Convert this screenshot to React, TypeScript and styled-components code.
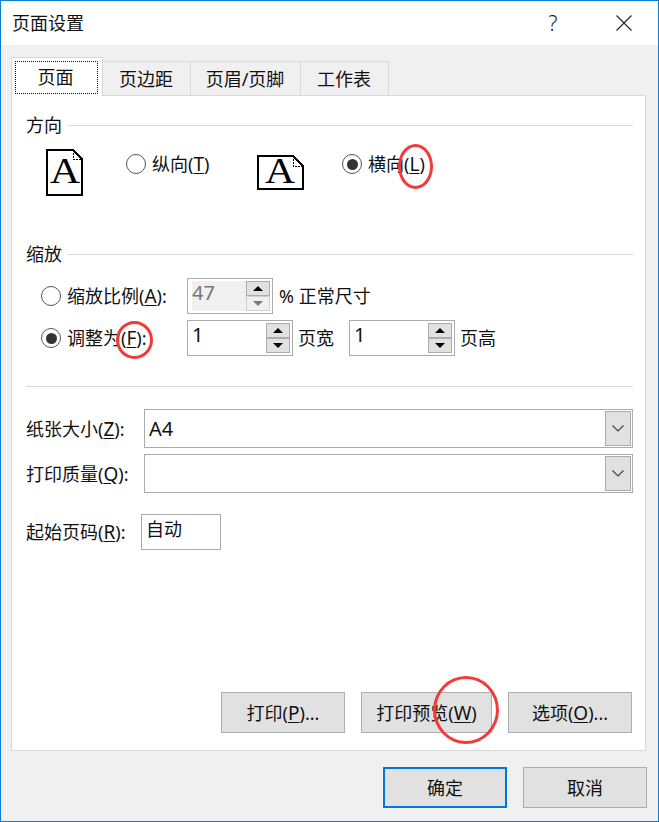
import React from "react";
import styled, { createGlobalStyle } from "styled-components";

const GlobalStyle = createGlobalStyle`
  html, body {
    margin: 0;
    padding: 0;
    background: #fff;
  }
  * {
    box-sizing: border-box;
  }
`;

const FONT = `"Noto Sans", "Noto Sans CJK SC", sans-serif`;

const Window = styled.div`
  position: relative;
  width: 659px;
  height: 822px;
  display: flex;
  flex-direction: column;
  border: 1px solid #0c7cd5;
  font-family: ${FONT};
  font-size: 18px;
  line-height: 24px;
  color: #111;
  overflow: hidden;
`;

const TitleBar = styled.div`
  height: 44px;
  flex: none;
  display: flex;
  align-items: center;
  padding-left: 11px;
  background: #fff;
`;

const Title = styled.div`
  flex: 1;
`;

const HelpButton = styled.div`
  width: 20px;
  margin-right: 53px;
  text-align: center;
  font-size: 21px;
  font-weight: 300;
  color: #222;
`;

const CloseButton = styled.svg`
  width: 16px;
  height: 16px;
  margin-right: 26px;
`;

const Body = styled.div`
  flex: 1;
  display: flex;
  flex-direction: column;
  padding: 12px 12px 0 10px;
  background: #f0f0f0;
`;

const TabStrip = styled.div`
  display: flex;
  align-items: flex-end;
  height: 39px;
  margin-bottom: -1px;
  position: relative;
  z-index: 1;
`;

const Tab = styled.div<{ $width: number; $active?: boolean }>`
  width: ${(p) => p.$width}px;
  height: ${(p) => (p.$active ? 39 : 35)}px;
  display: flex;
  align-items: center;
  justify-content: center;
  border: 1px solid #d9d9d9;
  border-left-width: ${(p) => (p.$active ? 1 : 0)}px;
  border-bottom-width: ${(p) => (p.$active ? 0 : 1)}px;
  background: ${(p) => (p.$active ? "#fff" : "#f0f0f0")};
  padding: ${(p) => (p.$active ? "3px 4px 3px 3px" : "0 1px 0 0")};
`;

const TabFocus = styled.div`
  width: 100%;
  height: 33px;
  display: flex;
  align-items: center;
  justify-content: center;
  padding-right: 2px;
  outline: 1px dotted #111;
  outline-offset: -1px;
`;

const Panel = styled.div`
  width: 635px;
  height: 656px;
  flex: none;
  display: flex;
  flex-direction: column;
  padding: 17px 12px 17px 14px;
  background: #fff;
  border: 1px solid #d9d9d9;
`;

const SectionHeader = styled.div<{ $top?: number }>`
  display: flex;
  align-items: center;
  gap: 5px;
  margin-top: ${(p) => p.$top ?? 0}px;

  &::after {
    content: "";
    flex: 1;
    height: 1px;
    background: #d9d9d9;
  }
`;

const OrientationGrid = styled.div`
  display: grid;
  grid-template-columns: 80px 131px 85px 1fr;
  align-items: center;
  height: 47px;
  margin-top: 12px;
  padding-left: 20px;
`;

const RadioOption = styled.div`
  display: flex;
  align-items: center;
  gap: 6px;
  height: 20px;
  align-self: start;
  margin-top: 5px;
`;

const Radio = styled.span<{ $checked?: boolean }>`
  width: 20px;
  height: 20px;
  flex: none;
  display: flex;
  align-items: center;
  justify-content: center;
  border: 1px solid #555;
  border-radius: 50%;
  background: #fff;

  &::after {
    content: "";
    display: ${(p) => (p.$checked ? "block" : "none")};
    width: 11px;
    height: 11px;
    border-radius: 50%;
    background: #333;
  }
`;

const Key = styled.u`
  font-size: 19px;
  text-underline-offset: 2px;
`;

const PageIcon = styled.svg`
  display: block;
  overflow: visible;
`;

const ScaleRow = styled.div<{ $top: number }>`
  display: grid;
  grid-template-columns: 146px auto;
  justify-content: start;
  align-items: center;
  height: 36px;
  margin-top: ${(p) => p.$top}px;
  padding-left: 15px;
`;

const ScaleLabel = styled.div`
  display: flex;
  align-items: center;
  gap: 6px;
`;

const ScaleFields = styled.div`
  display: flex;
  align-items: center;
`;

const Spin = styled.div<{ $width: number; $disabled?: boolean }>`
  width: ${(p) => p.$width}px;
  height: 36px;
  display: flex;
  padding: 2px 2px 2px 4px;
  border: 1px solid #ababab;
  background: #fff;
  color: ${(p) => (p.$disabled ? "#777" : "#111")};
`;

const SpinValue = styled.div<{ $disabled?: boolean }>`
  flex: 1;
  background: ${(p) => (p.$disabled ? "#f0f0f0" : "#fff")};
  font-size: 20px;
  line-height: 24px;
`;

const SpinButtons = styled.div`
  width: 24px;
  display: flex;
  flex-direction: column;
`;

const SpinButton = styled.div<{ $down?: boolean; $disabled?: boolean }>`
  flex: 1;
  display: flex;
  align-items: center;
  justify-content: center;
  border: 1px solid ${(p) => (p.$disabled ? "#d0d0d0" : "#adadad")};
  background: ${(p) => (p.$disabled ? "#f0f0f0" : "#e1e1e1")};

  &::after {
    content: "";
    border-left: 5px solid transparent;
    border-right: 5px solid transparent;
    ${(p) => (p.$down ? "border-top" : "border-bottom")}: 5px solid
      ${(p) => (p.$disabled ? "#7a7a7a" : "#000")};
  }
`;

const FieldSuffix = styled.span<{ $left: number; $right?: number }>`
  margin-left: ${(p) => p.$left}px;
  margin-right: ${(p) => p.$right ?? 0}px;
`;

const Divider = styled.div`
  height: 1px;
  margin-top: 30px;
  background: #d9d9d9;
`;

const SelectRow = styled.div<{ $top: number }>`
  display: grid;
  grid-template-columns: 118px 489px;
  align-items: center;
  height: 39px;
  margin-top: ${(p) => p.$top}px;
`;

const Select = styled.div`
  height: 39px;
  display: flex;
  justify-content: space-between;
  align-items: center;
  padding: 1px 1px 1px 4px;
  border: 1px solid #ababab;
  background: #fff;
  font-size: 20px;
`;

const SelectArrow = styled.div`
  width: 26px;
  height: 35px;
  display: flex;
  align-items: center;
  justify-content: center;
  border: 1px solid #ababab;
  background: #e1e1e1;
`;

const StartRow = styled.div`
  display: grid;
  grid-template-columns: 115px 80px;
  align-items: center;
  height: 36px;
  margin-top: 21px;
`;

const StartInput = styled.div`
  height: 36px;
  padding: 2px 4px;
  border: 1px solid #ababab;
  background: #fff;
`;

const ActionRow = styled.div<{ $inset: number }>`
  display: flex;
  justify-content: flex-end;
  gap: 16px;
  margin-top: auto;
  margin-right: ${(p) => p.$inset}px;
`;

const Button = styled.div<{ $width?: number; $primary?: boolean }>`
  width: ${(p) => p.$width ?? 124}px;
  height: 41px;
  display: flex;
  align-items: center;
  justify-content: center;
  border: ${(p) => (p.$primary ? "2px solid #0078d7" : "1px solid #adadad")};
  background: #e1e1e1;
`;

const Footer = styled.div`
  display: flex;
  justify-content: flex-end;
  gap: 16px;
  padding: 16px 0 0;
  margin-right: -1px;
`;

const Marker = styled.div<{ $x: number; $y: number; $w: number; $h: number }>`
  position: absolute;
  left: ${(p) => p.$x}px;
  top: ${(p) => p.$y}px;
  width: ${(p) => p.$w}px;
  height: ${(p) => p.$h}px;
  border: 3px solid #f23a3a;
  border-radius: 50%;
`;

const Chevron = () => (
  <svg width="12" height="7" viewBox="0 0 12 7">
    <path d="M0.5 0.5 L6 6 L11.5 0.5" fill="none" stroke="#444" strokeWidth="1.2" />
  </svg>
);

const IconLetter = ({ x, y }: { x: number; y: number }) => (
  <text
    x={x}
    y={y}
    fontFamily='"Liberation Serif", serif'
    fontSize="35"
    fill="#000"
    textLength="30"
    lengthAdjust="spacingAndGlyphs"
  >
    A
  </text>
);

const PortraitIcon = () => (
  <PageIcon width="37" height="47" viewBox="0 0 37 47" shapeRendering="crispEdges">
    <path d="M1 1 H27 L36 10 V46 H1 Z" fill="#fff" stroke="#000" strokeWidth="2" />
    <path d="M27 1 V10 H36" fill="none" stroke="#000" strokeWidth="1" strokeDasharray="2 1" />
    <IconLetter x={4} y={34} />
  </PageIcon>
);

const LandscapeIcon = () => (
  <PageIcon width="47" height="35" viewBox="0 0 47 35" shapeRendering="crispEdges">
    <path d="M1 1 H36 L46 11 V34 H1 Z" fill="#fff" stroke="#000" strokeWidth="2" />
    <path d="M36 1 V11 H46" fill="none" stroke="#000" strokeWidth="1" strokeDasharray="2 1" />
    <IconLetter x={8} y={28} />
  </PageIcon>
);

const SpinBox = ({ value, width, disabled }: { value: string; width: number; disabled?: boolean }) => (
  <Spin $width={width} $disabled={disabled}>
    <SpinValue $disabled={disabled}>{value}</SpinValue>
    <SpinButtons>
      <SpinButton />
      <SpinButton $down $disabled={disabled} />
    </SpinButtons>
  </Spin>
);

export default function App() {
  return (
    <>
      <GlobalStyle />
      <Window>
        <TitleBar>
          <Title>页面设置</Title>
          <HelpButton>?</HelpButton>
          <CloseButton viewBox="0 0 16 16">
            <path d="M0.5 0.5 L15.5 15.5 M15.5 0.5 L0.5 15.5" stroke="#222" strokeWidth="1.1" fill="none" />
          </CloseButton>
        </TitleBar>
        <Body>
          <TabStrip>
            <Tab $width={92} $active>
              <TabFocus>页面</TabFocus>
            </Tab>
            <Tab $width={88}>页边距</Tab>
            <Tab $width={110}>页眉/页脚</Tab>
            <Tab $width={88}>工作表</Tab>
          </TabStrip>
          <Panel>
            <SectionHeader>方向</SectionHeader>
            <OrientationGrid>
              <PortraitIcon />
              <RadioOption>
                <Radio />
                <span>
                  纵向(<Key>T</Key>)
                </span>
              </RadioOption>
              <LandscapeIcon />
              <RadioOption>
                <Radio $checked />
                <span>
                  横向(<Key>L</Key>)
                </span>
              </RadioOption>
            </OrientationGrid>

            <SectionHeader $top={46}>缩放</SectionHeader>
            <ScaleRow $top={12}>
              <ScaleLabel>
                <Radio />
                <span>
                  缩放比例(<Key>A</Key>):
                </span>
              </ScaleLabel>
              <ScaleFields>
                <SpinBox value="47" width={86} disabled />
                <FieldSuffix $left={6}>% 正常尺寸</FieldSuffix>
              </ScaleFields>
            </ScaleRow>
            <ScaleRow $top={6}>
              <ScaleLabel>
                <Radio $checked />
                <span>
                  调整为(<Key>F</Key>):
                </span>
              </ScaleLabel>
              <ScaleFields>
                <SpinBox value="1" width={106} />
                <FieldSuffix $left={5} $right={15}>
                  页宽
                </FieldSuffix>
                <SpinBox value="1" width={106} />
                <FieldSuffix $left={5}>页高</FieldSuffix>
              </ScaleFields>
            </ScaleRow>

            <Divider />

            <SelectRow $top={22}>
              <span>
                纸张大小(<Key>Z</Key>):
              </span>
              <Select>
                <span>A4</span>
                <SelectArrow>
                  <Chevron />
                </SelectArrow>
              </Select>
            </SelectRow>
            <SelectRow $top={6}>
              <span>
                打印质量(<Key>Q</Key>):
              </span>
              <Select>
                <span />
                <SelectArrow>
                  <Chevron />
                </SelectArrow>
              </Select>
            </SelectRow>
            <StartRow>
              <span>
                起始页码(<Key>R</Key>):
              </span>
              <StartInput>自动</StartInput>
            </StartRow>

            <ActionRow $inset={1}>
              <Button>
                打印(<Key>P</Key>)...
              </Button>
              <Button $width={131}>
                打印预览(<Key>W</Key>)
              </Button>
              <Button>
                选项(<Key>O</Key>)...
              </Button>
            </ActionRow>
          </Panel>
          <Footer>
            <Button $primary>确定</Button>
            <Button>取消</Button>
          </Footer>
        </Body>
        <Marker $x={397} $y={143} $w={35} $h={45} />
        <Marker $x={115} $y={320} $w={37} $h={38} />
        <Marker $x={432} $y={675} $w={66} $h={68} />
      </Window>
    </>
  );
}
